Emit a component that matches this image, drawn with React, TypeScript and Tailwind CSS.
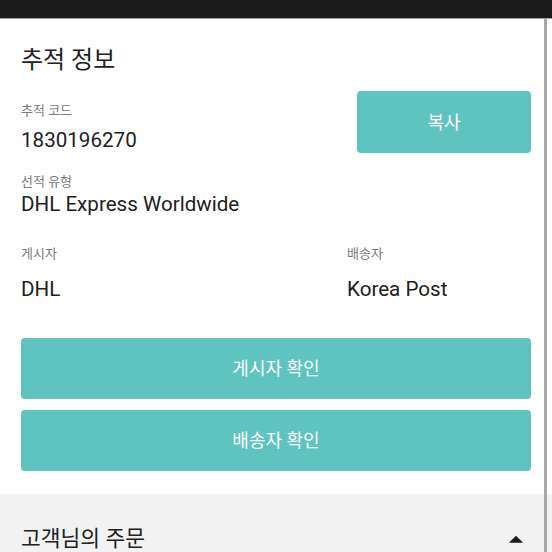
import React from 'react';

const font = { fontFamily: 'Roboto, "Noto Sans CJK KR", sans-serif' };

const Label = ({ children, className = '' }: { children: React.ReactNode; className?: string }) => (
  <div className={`text-[13px] leading-[16px] text-[#7a7a7a] ${className}`}>{children}</div>
);

const Value = ({ children, className = '' }: { children: React.ReactNode; className?: string }) => (
  <div className={`text-[20.6px] leading-[24px] text-[#212121] ${className}`}>{children}</div>
);

export default function App() {
  return (
    <div className="relative w-[552px] h-[552px] overflow-hidden bg-white" style={font}>
      {/* status bar */}
      <div className="h-[18px] bg-[#1c1c1c] border-b border-[#a0a0a0] box-content" />

      {/* 추적 정보 */}
      <div className="px-[21px] pb-[23px]">
        <h1 className="mt-[25px] text-[24px] leading-[32px] text-[#212121] font-normal">추적 정보</h1>

        <div className="mt-[15px] flex items-start">
          <div className="flex-1">
            <Label className="mt-[12px]">추적 코드</Label>
            <Value className="mt-[9px]">1830196270</Value>
          </div>
          <button className="w-[174px] h-[62px] rounded-[4px] bg-[#5fc3c0] text-white text-[18px]">
            복사
          </button>
        </div>

        <Label className="mt-[21px]">선적 유형</Label>
        <Value className="mt-[2px]">DHL Express Worldwide</Value>

        <div className="mt-[30px] grid grid-cols-[326px_1fr]">
          <div>
            <Label>게시자</Label>
            <Value className="mt-[15px]">DHL</Value>
          </div>
          <div>
            <Label>배송자</Label>
            <Value className="mt-[15px]">Korea Post</Value>
          </div>
        </div>

        <div className="mt-[37px] flex flex-col gap-[11px]">
          <button className="h-[61px] rounded-[4px] bg-[#5fc3c0] text-white text-[18px]">게시자 확인</button>
          <button className="h-[61px] rounded-[4px] bg-[#5fc3c0] text-white text-[18px]">배송자 확인</button>
        </div>
      </div>

      {/* 고객님의 주문 */}
      <div className="bg-[#f2f2f2] h-[80px] px-[21px] pt-[29px] flex items-start justify-between">
        <div className="mt-[2px] text-[21.5px] leading-[28px] text-[#212121]">고객님의 주문</div>
        <svg width="34" height="34" viewBox="0 0 24 24" className="-mr-[2px]">
          <path d="M7 14l5-5 5 5z" fill="#1a1a1a" />
        </svg>
      </div>

      {/* scrollbar */}
      <div className="absolute top-[19px] bottom-0 left-[544px] w-[3px] bg-[#a8a8a8]" />
    </div>
  );
}
